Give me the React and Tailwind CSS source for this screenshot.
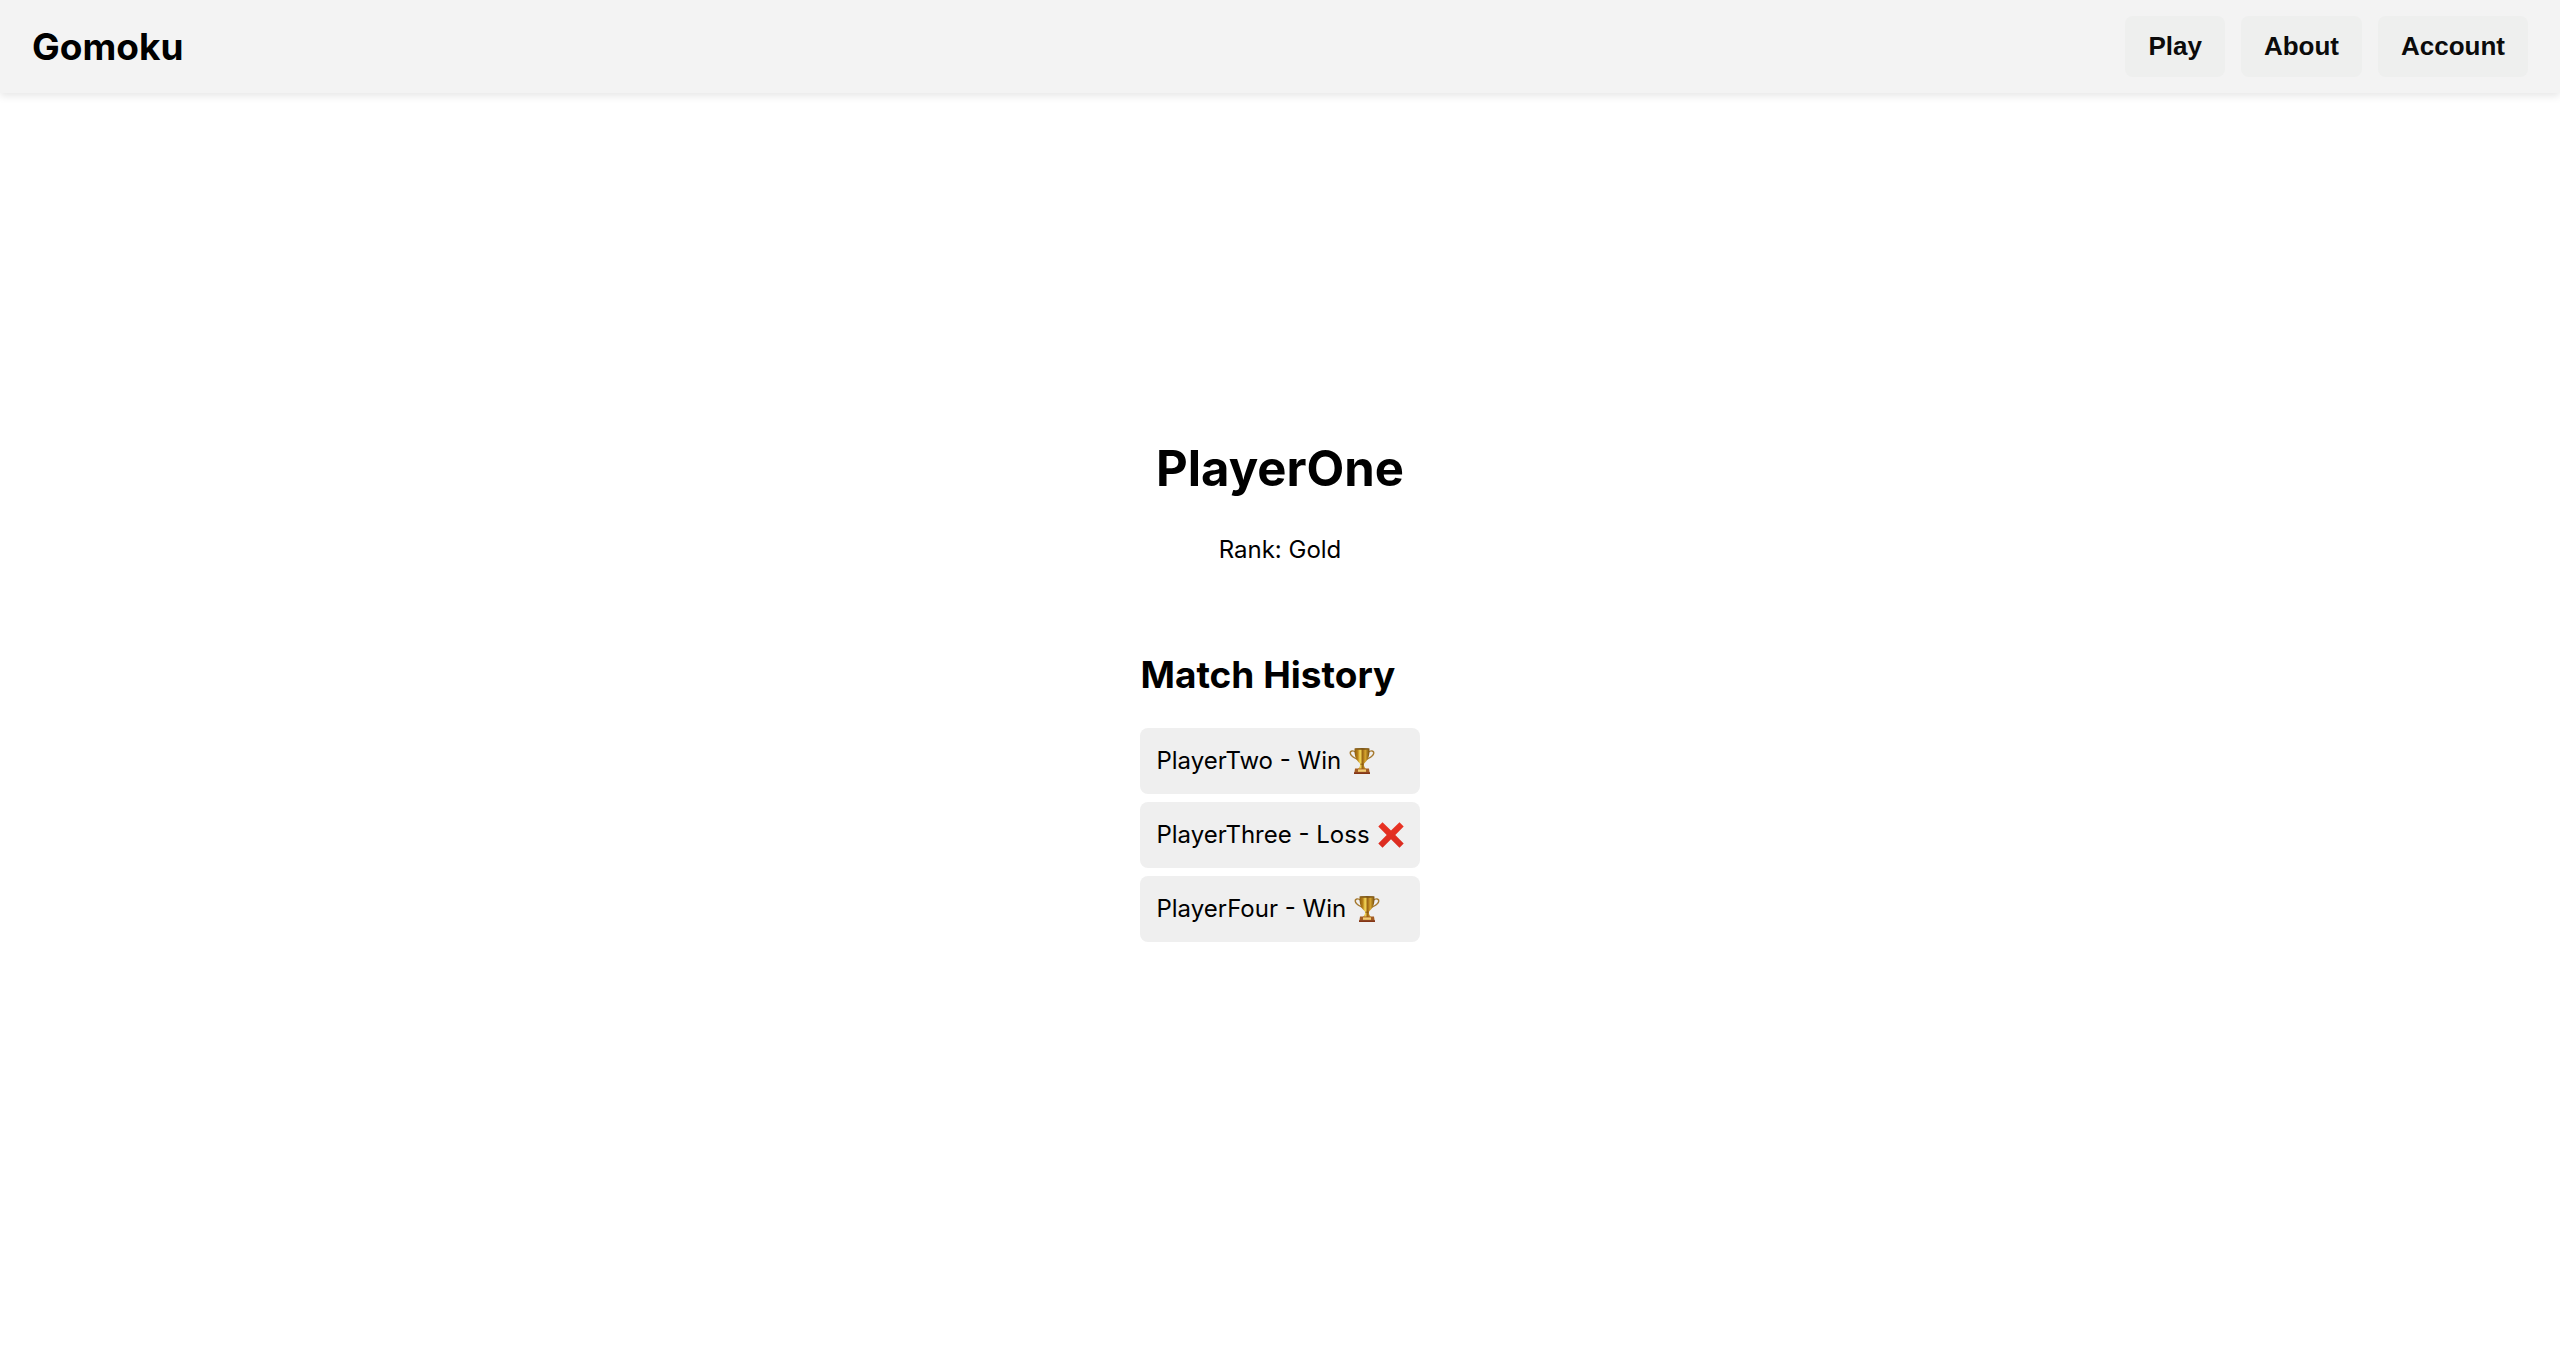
const matches = [
  { opponent: 'PlayerTwo', result: 'Win' },
  { opponent: 'PlayerThree', result: 'Loss' },
  { opponent: 'PlayerFour', result: 'Win' },
];

function Trophy() {
  return (
    <svg viewBox="0 0 26 28" className="h-7 w-[26px] shrink-0" role="img" aria-label="trophy">
      <defs>
        <linearGradient id="cup" x1="0" x2="1" y1="0" y2="0">
          <stop offset="0" stopColor="#8a5a0e" />
          <stop offset="0.22" stopColor="#b98219" />
          <stop offset="0.38" stopColor="#f7dc5a" />
          <stop offset="0.54" stopColor="#9a6412" />
          <stop offset="0.72" stopColor="#d6a52e" />
          <stop offset="1" stopColor="#744b0c" />
        </linearGradient>
      </defs>
      <path d="M6.600 5.200C4.200 3 .9 3.700 1.300 6.300c.4 2.900 3.800 4.200 7.200 6.200M19.400 5.200c2.400-2.200 5.700-1.500 5.300 1.100-.4 2.900-3.800 4.200-7.200 6.200" fill="none" stroke="#a67a30" strokeWidth="1.400" />
      <path d="M5.600 1.600h14.800c.3 5.600-.6 10.400-3.600 13.200-1.300 1.200-2 1.800-1.900 3.100.1 1.500.9 2.700 2.100 4.100H9c1.200-1.400 2-2.600 2.100-4.100.1-1.300-.6-1.900-1.900-3.100C6.200 12 5.300 7.200 5.600 1.600z" fill="url(#cup)" />
      <ellipse cx="13" cy="1.800" rx="7.400" ry="0.900" fill="#7d5617" />
      <path d="M11.300 17.200h3.400" stroke="#7d4f0b" strokeWidth="0.800" />
      <path d="M6 21.600h14l.6 4.200H5.400z" fill="#a45d22" />
      <path d="M9 22.400h8v2.400H9z" fill="#f0cc72" />
      <path d="M5 25.200h16V27H5z" fill="#843515" />
    </svg>
  );
}

function Cross() {
  return (
    <svg viewBox="0 0 26 28" className="h-7 w-[26px] shrink-0" role="img" aria-label="cross mark">
      <defs>
        <linearGradient id="cross" x1="0" x2="0" y1="0" y2="1">
          <stop offset="0" stopColor="#ea3323" />
          <stop offset="1" stopColor="#d92b20" />
        </linearGradient>
      </defs>
      <path d="M4.500 1.200 13 9.600l8.500-8.400 4.200 4.300-8.400 8.500 8.400 8.400-4.200 4.300L13 18.300l-8.500 8.400-4.200-4.300L8.700 14 .3 5.500z" fill="url(#cross)" />
    </svg>
  );
}

function NavButton({ children }) {
  return (
    <button
      type="button"
      className="rounded-lg bg-[#eeefee] px-[23px] py-4 font-['Liberation_Sans',Arial,sans-serif] text-[26px] leading-[29px] font-bold text-[#0b0b0b]"
    >
      {children}
    </button>
  );
}

export default function App() {
  return (
    <div className="flex min-h-screen flex-col bg-white font-['Inter',sans-serif] text-2xl text-black">
      <header className="flex items-center justify-between bg-[#f3f3f3] px-8 py-4 shadow-[0_3px_8px_rgba(0,0,0,0.1)]">
        <div className="text-[37px] leading-[46px] font-bold">Gomoku</div>
        <nav className="flex gap-4">
          <NavButton>Play</NavButton>
          <NavButton>About</NavButton>
          <NavButton>Account</NavButton>
        </nav>
      </header>
      <main className="flex grow flex-col items-center justify-center pb-[72px]">
        <h1 className="text-[49px] leading-[62px] font-bold">PlayerOne</h1>
        <p className="mt-[35px] leading-[30px]">Rank: Gold</p>
        <section className="mt-[87px]">
          <h2 className="text-[37px] leading-[46px] font-bold">Match History</h2>
          <ul className="mt-[30px] flex flex-col gap-2">
            {matches.map(({ opponent, result }) => (
              <li key={opponent} className="flex items-center gap-2 rounded-lg bg-[#efefef] px-4 py-[18px] leading-[30px]">
                <span>{opponent} - {result}</span>
                {result === 'Win' ? <Trophy /> : <Cross />}
              </li>
            ))}
          </ul>
        </section>
      </main>
    </div>
  );
}
